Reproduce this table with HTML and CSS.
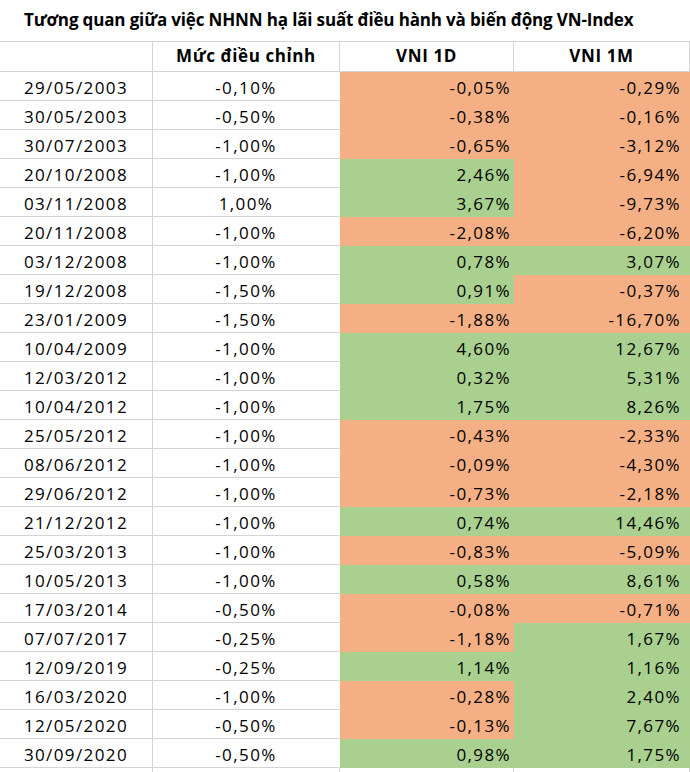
FILE: index.html
```html
<!DOCTYPE html>
<html lang="vi">
<head>
<meta charset="utf-8">
<title>Tương quan NHNN và VN-Index</title>
<link rel="stylesheet" href="styles.css">
</head>
<body>
<div class="sheet">
  <div class="title">Tương quan giữa việc NHNN hạ lãi suất điều hành và biến động VN-Index</div>
  <div class="row head">
    <div class="cell"></div>
    <div class="cell c">Mức điều chỉnh</div>
    <div class="cell c">VNI 1D</div>
    <div class="cell c">VNI 1M</div>
  </div>
  <div class="row"><div class="cell c">29/05/2003</div><div class="cell c b">-0,10%</div><div class="cell r neg">-0,05%</div><div class="cell r d neg">-0,29%</div></div>
  <div class="row"><div class="cell c">30/05/2003</div><div class="cell c b">-0,50%</div><div class="cell r neg">-0,38%</div><div class="cell r d neg">-0,16%</div></div>
  <div class="row"><div class="cell c">30/07/2003</div><div class="cell c b">-1,00%</div><div class="cell r neg">-0,65%</div><div class="cell r d neg">-3,12%</div></div>
  <div class="row"><div class="cell c">20/10/2008</div><div class="cell c b">-1,00%</div><div class="cell r pos">2,46%</div><div class="cell r d neg">-6,94%</div></div>
  <div class="row"><div class="cell c">03/11/2008</div><div class="cell c b">1,00%</div><div class="cell r pos">3,67%</div><div class="cell r d neg">-9,73%</div></div>
  <div class="row"><div class="cell c">20/11/2008</div><div class="cell c b">-1,00%</div><div class="cell r neg">-2,08%</div><div class="cell r d neg">-6,20%</div></div>
  <div class="row"><div class="cell c">03/12/2008</div><div class="cell c b">-1,00%</div><div class="cell r pos">0,78%</div><div class="cell r d pos">3,07%</div></div>
  <div class="row"><div class="cell c">19/12/2008</div><div class="cell c b">-1,50%</div><div class="cell r pos">0,91%</div><div class="cell r d neg">-0,37%</div></div>
  <div class="row"><div class="cell c">23/01/2009</div><div class="cell c b">-1,50%</div><div class="cell r neg">-1,88%</div><div class="cell r d neg">-16,70%</div></div>
  <div class="row"><div class="cell c">10/04/2009</div><div class="cell c b">-1,00%</div><div class="cell r pos">4,60%</div><div class="cell r d pos">12,67%</div></div>
  <div class="row"><div class="cell c">12/03/2012</div><div class="cell c b">-1,00%</div><div class="cell r pos">0,32%</div><div class="cell r d pos">5,31%</div></div>
  <div class="row"><div class="cell c">10/04/2012</div><div class="cell c b">-1,00%</div><div class="cell r pos">1,75%</div><div class="cell r d pos">8,26%</div></div>
  <div class="row"><div class="cell c">25/05/2012</div><div class="cell c b">-1,00%</div><div class="cell r neg">-0,43%</div><div class="cell r d neg">-2,33%</div></div>
  <div class="row"><div class="cell c">08/06/2012</div><div class="cell c b">-1,00%</div><div class="cell r neg">-0,09%</div><div class="cell r d neg">-4,30%</div></div>
  <div class="row"><div class="cell c">29/06/2012</div><div class="cell c b">-1,00%</div><div class="cell r neg">-0,73%</div><div class="cell r d neg">-2,18%</div></div>
  <div class="row"><div class="cell c">21/12/2012</div><div class="cell c b">-1,00%</div><div class="cell r pos">0,74%</div><div class="cell r d pos">14,46%</div></div>
  <div class="row"><div class="cell c">25/03/2013</div><div class="cell c b">-1,00%</div><div class="cell r neg">-0,83%</div><div class="cell r d neg">-5,09%</div></div>
  <div class="row"><div class="cell c">10/05/2013</div><div class="cell c b">-1,00%</div><div class="cell r pos">0,58%</div><div class="cell r d pos">8,61%</div></div>
  <div class="row"><div class="cell c">17/03/2014</div><div class="cell c b">-0,50%</div><div class="cell r neg">-0,08%</div><div class="cell r d neg">-0,71%</div></div>
  <div class="row"><div class="cell c">07/07/2017</div><div class="cell c b">-0,25%</div><div class="cell r neg">-1,18%</div><div class="cell r d pos">1,67%</div></div>
  <div class="row"><div class="cell c">12/09/2019</div><div class="cell c b">-0,25%</div><div class="cell r pos">1,14%</div><div class="cell r d pos">1,16%</div></div>
  <div class="row"><div class="cell c">16/03/2020</div><div class="cell c b">-1,00%</div><div class="cell r neg">-0,28%</div><div class="cell r d pos">2,40%</div></div>
  <div class="row"><div class="cell c">12/05/2020</div><div class="cell c b">-0,50%</div><div class="cell r neg">-0,13%</div><div class="cell r d pos">7,67%</div></div>
  <div class="row"><div class="cell c">30/09/2020</div><div class="cell c b">-0,50%</div><div class="cell r pos">0,98%</div><div class="cell r d pos">1,75%</div></div>
  <div class="row"><div class="cell"></div><div class="cell"></div><div class="cell"></div><div class="cell"></div></div>
</div>
</body>
</html>
```
FILE: styles.css
```css
html, body {
  margin: 0;
  padding: 0;
  background: #ffffff;
}
.sheet {
  width: 690px;
  height: 772px;
  overflow: hidden;
  font-family: "Open Sans", "Noto Sans", sans-serif;
  font-size: 17px;
  letter-spacing: 1.4px;
  color: #000000;
}
.title {
  box-sizing: border-box;
  height: 42px;
  padding: 8px 0 0 24px;
  line-height: 24px;
  font-weight: bold;
  letter-spacing: -0.15px;
  white-space: nowrap;
  border-bottom: 1px solid #d4d4d4;
}
.row {
  display: grid;
  grid-template-columns: 153px 187px 174px 176px;
  height: 29px;
}
.row.head {
  height: 30px;
  font-weight: bold;
  letter-spacing: 0.6px;
}
.cell {
  box-sizing: border-box;
  border-right: 1px solid #d4d4d4;
  border-bottom: 1px solid #d4d4d4;
  padding-top: 3px;
  line-height: 25px;
  white-space: nowrap;
}
.head .cell {
  padding-top: 2px;
  line-height: 24px;
}
.c {
  text-align: center;
}
.r {
  text-align: right;
  padding-right: 2px;
}
.r.d {
  padding-right: 8px;
}
.b {
  border-right-color: #ffffff;
}
.neg {
  background: #f4b084;
  border-color: #f4b084;
}
.pos {
  background: #a9d08e;
  border-color: #a9d08e;
}
```
